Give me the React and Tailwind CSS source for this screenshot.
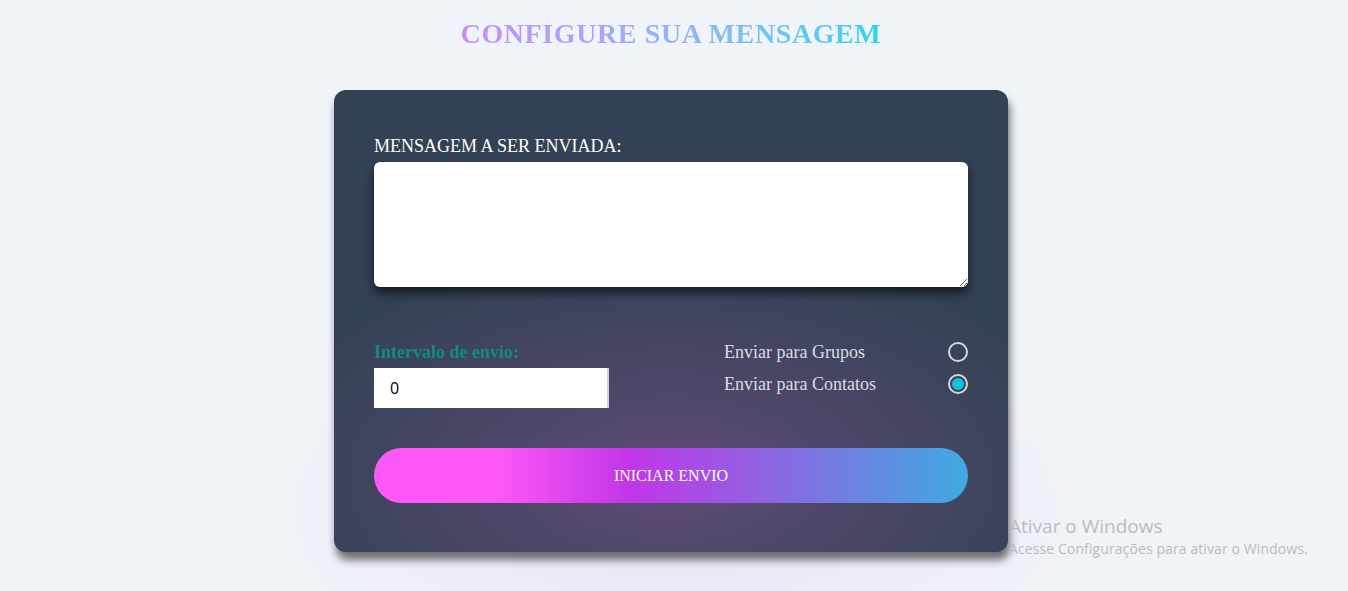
import React, { useState } from 'react';

function RadioRow({ label, checked, onSelect }) {
  return (
    <label className="flex items-center justify-between h-8 cursor-pointer" onClick={onSelect}>
      <span className="text-[18px] text-[#d9dee6]">{label}</span>
      <span className="w-5 h-5 rounded-full border-2 border-[#d4d6dc] flex items-center justify-center">
        {checked && <span className="w-[12px] h-[12px] rounded-full bg-[#0cc6d6]" />}
      </span>
    </label>
  );
}

export default function App() {
  const [target, setTarget] = useState('contatos');

  return (
    <div className="relative min-h-[591px] bg-[#f0f3f8] flex flex-col items-center pr-[6px] font-['Liberation_Serif','Times_New_Roman',serif] overflow-hidden">
      {/* soft glow behind the card */}
      <div className="absolute left-[250px] top-[300px] w-[850px] h-[420px] rounded-full bg-[radial-gradient(closest-side,rgba(190,120,230,0.12),transparent)]" />

      <h1 className="relative pt-[18px] text-[28px] leading-[32px] tracking-[0.6px] font-bold bg-gradient-to-r from-[#c38dfb] to-[#27d4ee] bg-clip-text text-transparent">
        CONFIGURE SUA MENSAGEM
      </h1>

      <div className="relative mt-[40px] w-[674px] rounded-xl bg-[#334155] bg-[radial-gradient(ellipse_430px_230px_at_50%_84%,rgba(185,95,185,0.33),transparent)] shadow-[2px_8px_8px_rgba(0,0,0,0.55)] px-10 pt-[47px] pb-[49px]">
        <label className="block text-[18px] leading-[18px] mb-[7px] text-white">MENSAGEM A SER ENVIADA:</label>
        <textarea className="block w-full h-[125px] rounded-md bg-white shadow-[0_6px_10px_rgba(0,0,0,0.6)] outline-none p-2" />

        <div className="flex justify-between mt-[49px]">
          <div className="flex flex-col">
            <span className="text-[18px] leading-[32px] font-bold text-[#0f8a7c]">Intervalo de envio:</span>
            <input
              defaultValue="0"
              className="w-[235px] h-[40px] bg-white border-r-2 border-[#d0d3d8] pl-[16px] text-[16px] text-black font-['Open_Sans',sans-serif] outline-none"
            />
          </div>
          <div className="w-[244px] flex flex-col">
            <RadioRow label="Enviar para Grupos" checked={target === 'grupos'} onSelect={() => setTarget('grupos')} />
            <RadioRow label="Enviar para Contatos" checked={target === 'contatos'} onSelect={() => setTarget('contatos')} />
          </div>
        </div>

        <button className="mt-10 w-full h-[55px] rounded-full bg-[linear-gradient(to_right,#ff58f8_20%,#c136e8_43%,#8a68e2_68%,#3eaae0_100%)] text-white text-[16px] uppercase">
          INICIAR ENVIO
        </button>
      </div>

      {/* Windows activation watermark */}
      <div className="absolute left-[1009px] top-[513px] font-['Open_Sans',sans-serif] text-[#b9bcc2] pointer-events-none">
        <div className="text-[19px] leading-[26px]">Ativar o Windows</div>
        <div className="text-[14px] leading-[20px] tracking-[0.1px]">Acesse Configurações para ativar o Windows.</div>
      </div>
    </div>
  );
}
